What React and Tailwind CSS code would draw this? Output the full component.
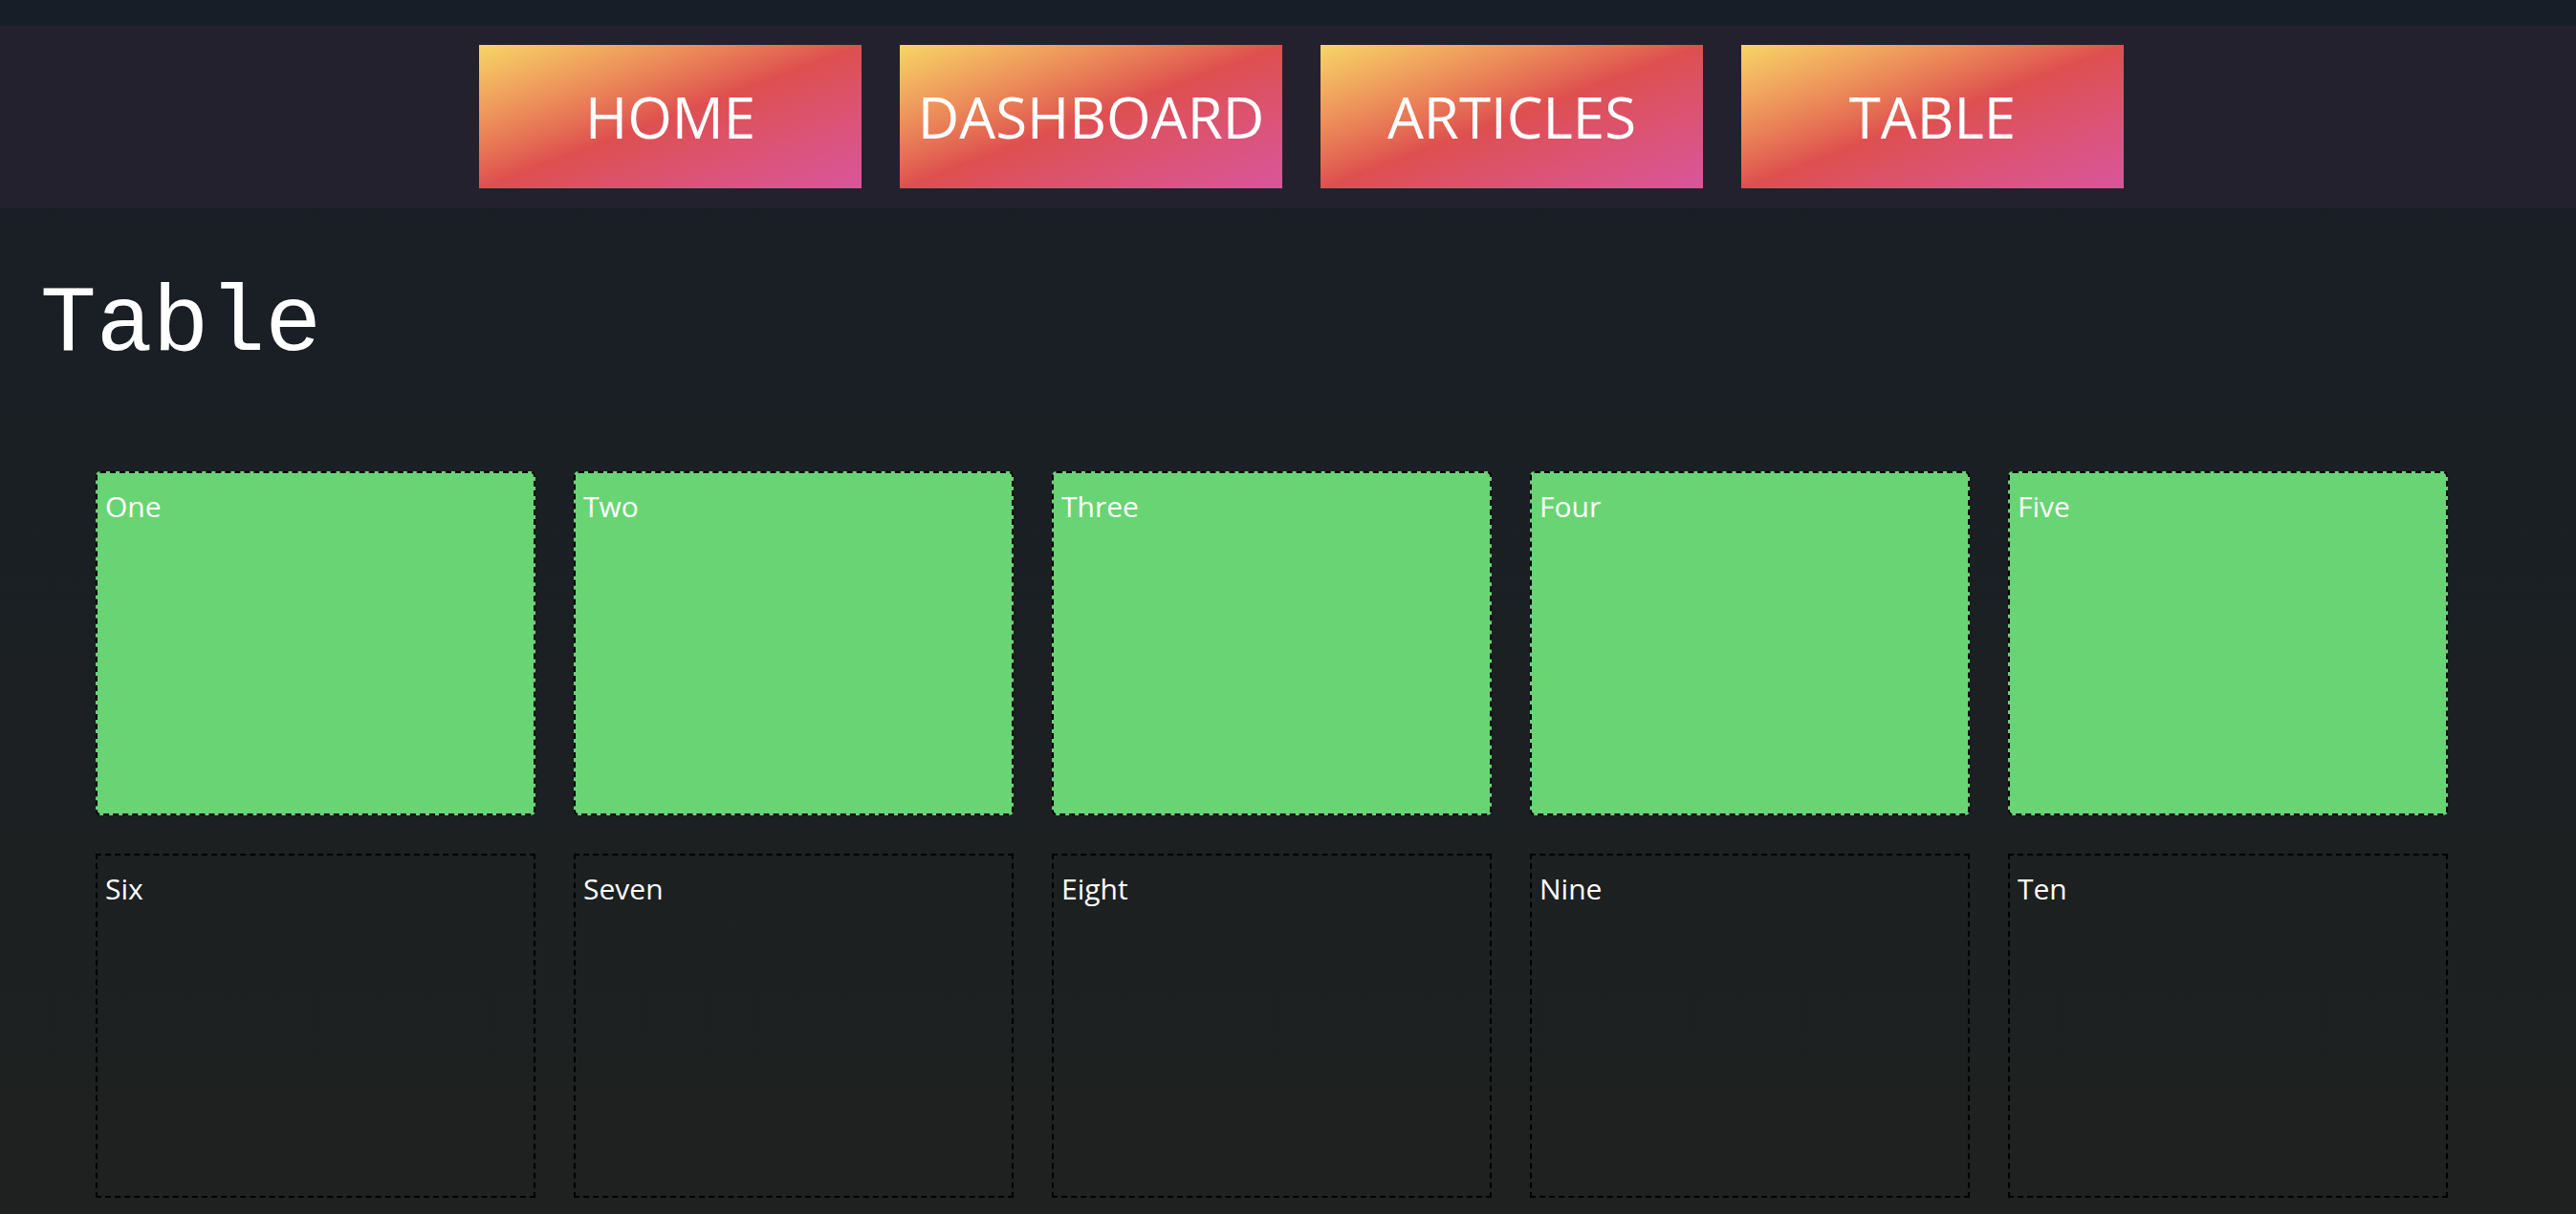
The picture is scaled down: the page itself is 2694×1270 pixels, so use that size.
import React from "react";

const navItems = ["HOME", "DASHBOARD", "ARTICLES", "TABLE"];
const row1 = ["One", "Two", "Three", "Four", "Five"];
const row2 = ["Six", "Seven", "Eight", "Nine", "Ten"];

export default function App() {
  return (
    <div className="min-h-screen bg-linear-to-b from-[#181e27] to-[#1e211f] pt-[27px] pb-[20px] text-white">
      <nav className="h-[190px] bg-[#24212f] flex items-center justify-center gap-[40px] pl-[28px]">
        {navItems.map((n) => (
          <a
            key={n}
            className="w-[400px] h-[150px] flex items-center justify-center bg-linear-to-br from-[#f6d566] via-[#de4f4f] to-[#d9559b] text-white text-[60px] font-medium whitespace-nowrap"
            style={{ fontFamily: '"Open Sans", "Noto Sans", sans-serif' }}
          >
            {n}
          </a>
        ))}
      </nav>
      <h1
        className="ml-[42px] mt-[74px] text-[98px] leading-none text-white"
        style={{ fontFamily: '"Liberation Mono", monospace' }}
      >
        Table
      </h1>
      <div
        className="mt-[104px] pl-[100px] grid grid-cols-[repeat(5,460px)] gap-[40px]"
        style={{ fontFamily: '"Open Sans", "Noto Sans", sans-serif' }}
      >
        {row1.map((t) => (
          <div
            key={t}
            className="h-[360px] bg-[#69d474] border-2 border-dashed border-black rounded-[5px] pt-[12px] pl-[8px] text-[30px] font-medium text-white"
          >
            {t}
          </div>
        ))}
        {row2.map((t) => (
          <div
            key={t}
            className="h-[360px] border-2 border-dashed border-black pt-[12px] pl-[8px] text-[30px] font-medium text-white"
          >
            {t}
          </div>
        ))}
      </div>
    </div>
  );
}
